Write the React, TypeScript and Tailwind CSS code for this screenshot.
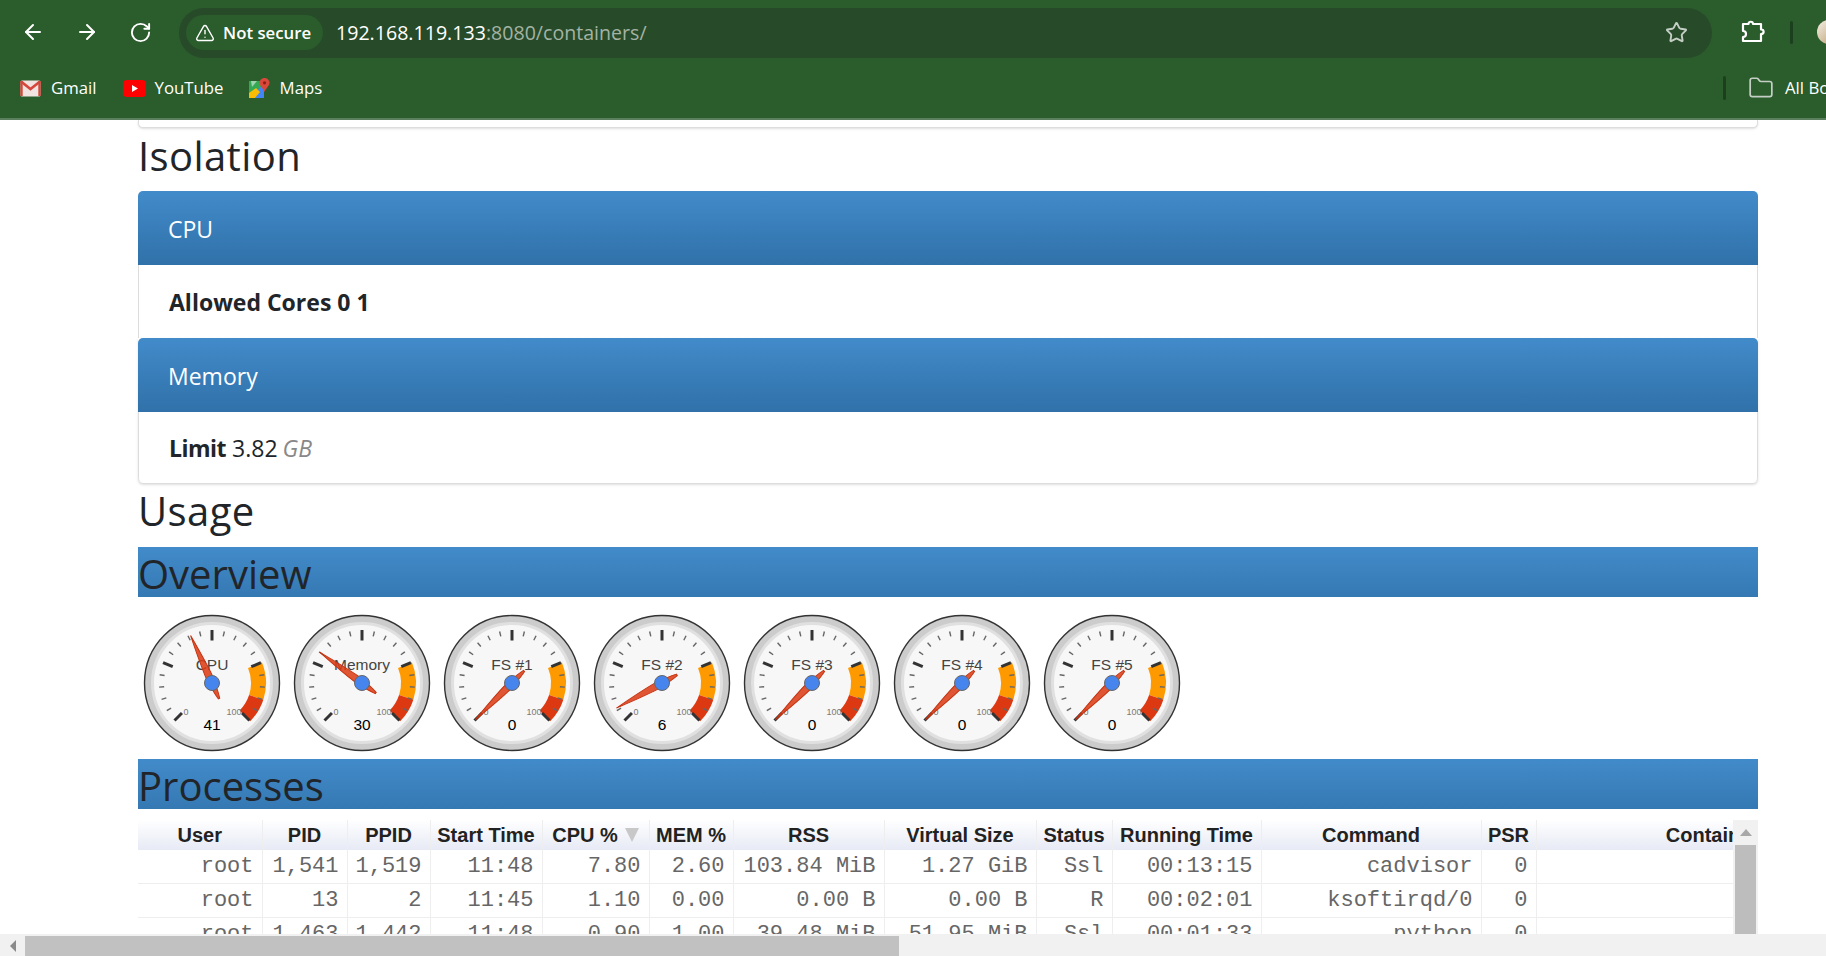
import { ArrowLeft, ArrowRight, Folder, RotateCw, Star, TriangleAlert } from "lucide-react";

const gauges = [
  { label: "CPU", value: 41, needle: 41 },
  { label: "Memory", value: 30, needle: 30 },
  { label: "FS #1", value: 0, needle: 0 },
  { label: "FS #2", value: 6, needle: 6 },
  { label: "FS #3", value: 0, needle: 0 },
  { label: "FS #4", value: 0, needle: 0 },
  { label: "FS #5", value: 0, needle: 0 },
];

const columns = [
  { name: "User", width: 124 },
  { name: "PID", width: 85 },
  { name: "PPID", width: 83 },
  { name: "Start Time", width: 112 },
  { name: "CPU %", width: 107 },
  { name: "MEM %", width: 84 },
  { name: "RSS", width: 151 },
  { name: "Virtual Size", width: 152 },
  { name: "Status", width: 76 },
  { name: "Running Time", width: 149 },
  { name: "Command", width: 220 },
  { name: "PSR", width: 55 },
  { name: "Container", width: 353 },
];

const rows = [
  ["root", "1,541", "1,519", "11:48", "7.80", "2.60", "103.84 MiB", "1.27 GiB", "Ssl", "00:13:15", "cadvisor", "0", ""],
  ["root", "13", "2", "11:45", "1.10", "0.00", "0.00 B", "0.00 B", "R", "00:02:01", "ksoftirqd/0", "0", ""],
  ["root", "1,463", "1,442", "11:48", "0.90", "1.00", "39.48 MiB", "51.95 MiB", "Ssl", "00:01:33", "python", "0", ""],
];

const polar = (r: number, deg: number, c: number, cy: number) => {
  const a = (deg * Math.PI) / 180;
  return [c + r * Math.sin(a), cy - r * Math.cos(a)];
};

const valueAngle = (v: number) => -135 + (270 * v) / 100;

function bandPath(from: number, to: number, c: number, cy: number) {
  const a = valueAngle(from);
  const b = valueAngle(to);
  const [x1, y1] = polar(54, a, c, cy);
  const [x2, y2] = polar(54, b, c, cy);
  const [x3, y3] = polar(39, b, c, cy);
  const [x4, y4] = polar(39, a, c, cy);
  return `M${x1} ${y1}A54 54 0 0 1 ${x2} ${y2}L${x3} ${y3}A39 39 0 0 0 ${x4} ${y4}Z`;
}

function Gauge({ label, value, needle }: { label: string; value: number; needle: number }) {
  const c = 74;
  const cy = 86;
  const ticks = [];
  for (let i = 0; i <= 20; i++) {
    const deg = valueAngle(i * 5);
    const major = i % 5 === 0;
    const [x1, y1] = polar(53, deg, c, cy);
    const [x2, y2] = polar(major ? 42.5 : 48, deg, c, cy);
    ticks.push(
      <line key={i} x1={x1} y1={y1} x2={x2} y2={y2} stroke={major ? "#333333" : "#666666"} strokeWidth={major ? 3 : 1.4} />
    );
  }
  return (
    <svg width="150" height="162" viewBox="0 0 150 162" className="shrink-0 font-['Liberation_Sans',sans-serif]">
      <circle cx={c} cy={cy} r={67.5} fill="#cccccc" stroke="#333333" strokeWidth="1.4" />
      <circle cx={c} cy={cy} r={59.5} fill="#f7f7f7" stroke="#e0e0e0" strokeWidth="3" />
      <path d={bandPath(75, 90, c, cy)} fill="#ff9900" />
      <path d={bandPath(90, 100, c, cy)} fill="#dc3912" />
      {ticks}
      <text x={c} y={cy - 13.5} textAnchor="middle" fontSize="15.5" fill="#444444">{label}</text>
      <text x={c - 26} y={cy + 32} textAnchor="middle" fontSize="9" fill="#777777">0</text>
      <text x={c + 22} y={cy + 32} textAnchor="middle" fontSize="9" fill="#777777">100</text>
      <text x={c} y={cy + 47} textAnchor="middle" fontSize="15.5" fill="#000000">{value}</text>
      <g transform={`rotate(${valueAngle(needle)} ${c} ${cy})`}>
        <path
          d={`M${c} ${cy - 52}Q${c + 3} ${cy - 22} ${c + 3.4} ${cy - 6}Q${c + 2.5} ${cy + 8} ${c + 0.8} ${cy + 17}L${c - 0.8} ${cy + 17}Q${c - 2.5} ${cy + 8} ${c - 3.4} ${cy - 6}Q${c - 3} ${cy - 22} ${c} ${cy - 52}Z`}
          fill="#dc3912"
          fillOpacity="0.85"
          stroke="#c63310"
          strokeWidth="1"
        />
      </g>
      <circle cx={c} cy={cy} r={7.5} fill="#4684ee" stroke="#666666" strokeWidth="1" />
    </svg>
  );
}

function GmailIcon() {
  return (
    <svg width="21" height="17" viewBox="0 0 21 17" className="shrink-0">
      <rect x="0.5" y="0.5" width="20" height="16" rx="1.5" fill="#f1e4e0" />
      <path d="M1 1.5L10.5 9L20 1.5" fill="none" stroke="#d6473c" strokeWidth="2.6" />
      <path d="M1.5 1V16M19.5 1V16" stroke="#cf4a3e" strokeWidth="2.4" />
    </svg>
  );
}

function YoutubeIcon() {
  return (
    <svg width="23" height="17" viewBox="0 0 23 17" className="shrink-0">
      <rect width="23" height="17" rx="4" fill="#ff0000" />
      <path d="M9 5L15 8.5L9 12Z" fill="#ffffff" />
    </svg>
  );
}

function MapsIcon() {
  return (
    <svg width="21" height="21" viewBox="0 0 21 21" className="shrink-0">
      <path d="M0 3H15V20H0Z" fill="#34a853" />
      <path d="M0 20L15 6V20Z" fill="#4285f4" />
      <path d="M0 20V15L7 10L11 14L6 20Z" fill="#fbbc04" />
      <path d="M2 3H8L3 9Z" fill="#9fd3b0" />
      <path d="M15.5 0C18.5 0 20.5 2.2 20.5 4.8C20.5 8 17 10 15.5 14C14 10 10.5 8 10.5 4.8C10.5 2.2 12.5 0 15.5 0Z" fill="#d9483b" />
      <circle cx="15.5" cy="4.8" r="1.6" fill="#8a1f16" />
    </svg>
  );
}

function PuzzleIcon() {
  return (
    <svg width="24" height="24" viewBox="0 0 24 24" fill="none" stroke="#ffffff" strokeWidth="2.2" strokeLinejoin="round" className="shrink-0">
      <path d="M2 4H7.5C7.5 1 12 1 12 4H20V9.5C23.5 9.5 23.5 14 20 14V21H2V17C6 17 6 11 2 11Z" />
    </svg>
  );
}

function PanelHead({ title }: { title: string }) {
  return (
    <div className="h-[74px] flex items-center pl-[30px] pt-[2px] text-white text-[23px] bg-gradient-to-b from-[#428bca] to-[#3071a9] rounded-t-[5px]">
      {title}
    </div>
  );
}

function SectionBar({ title }: { title: string }) {
  return (
    <div className="h-[50px] bg-gradient-to-b from-[#428bca] to-[#3579b3] text-[40px] font-medium leading-[53px] text-[#212529]">
      {title}
    </div>
  );
}

export default function App() {
  return (
    <div className="h-[956px] w-[1826px] flex flex-col overflow-hidden bg-white font-['Open_Sans',sans-serif]">
      <header className="h-[120px] shrink-0 bg-[#2a5c2c] border-b-2 border-[#5b805d]">
        <div className="h-[64px] flex items-center pl-[21px] overflow-hidden">
          <ArrowLeft className="shrink-0 text-white" size={24} strokeWidth={2} />
          <ArrowRight className="shrink-0 text-white ml-[30px]" size={24} strokeWidth={2} />
          <RotateCw className="shrink-0 text-white ml-[30px]" size={23} strokeWidth={2} />
          <div className="ml-[27px] w-[1533px] shrink-0 h-[50px] mt-[1px] rounded-full bg-[#274a29] flex items-center pl-[7px] pr-[24px]">
            <div className="h-[35px] w-[137px] shrink-0 rounded-full bg-[#2a5c2c] flex items-center pl-[9px] gap-[8px] text-white text-[16.8px] font-semibold whitespace-nowrap">
              <TriangleAlert className="shrink-0" size={20} strokeWidth={1.7} />
              Not secure
            </div>
            <div className="ml-[13px] text-[19.6px] text-white whitespace-nowrap">
              192.168.119.133<span className="text-[#a3b3a4]">:8080/containers/</span>
            </div>
            <Star className="ml-auto text-[#c4cec5]" size={23} strokeWidth={2} />
          </div>
          <div className="ml-[29px] shrink-0"><PuzzleIcon /></div>
          <div className="ml-[25px] w-[3px] h-[23px] shrink-0 bg-[#1c401e] rounded" />
          <div className="ml-[24px] w-[24px] h-[24px] shrink-0 rounded-full bg-gradient-to-br from-[#f5f0e6] to-[#b69a6a]" />
        </div>
        <div className="h-[54px] flex items-center text-white text-[16.8px] pb-[6px]">
          <div className="flex-1 flex items-center pl-[20px]">
            <GmailIcon />
            <span className="ml-[10px]">Gmail</span>
            <span className="ml-[26px]"><YoutubeIcon /></span>
            <span className="ml-[9px]">YouTube</span>
            <span className="ml-[25px]"><MapsIcon /></span>
            <span className="ml-[10px]">Maps</span>
          </div>
          <div className="w-[103px] shrink-0 flex items-center overflow-hidden">
            <div className="w-[3px] h-[24px] shrink-0 bg-[#1c401e] rounded" />
            <Folder className="ml-[22px] shrink-0 text-[#c4cec5]" size={26} strokeWidth={1.6} />
            <span className="ml-[11px] whitespace-nowrap">All Bookmarks</span>
          </div>
        </div>
      </header>

      <main className="flex-1 min-h-0 overflow-hidden pl-[138px] pr-[68px]">
        <div className="h-[8px] bg-white border-x border-b border-[#dddddd] rounded-b-[5px] shadow-sm" />
        <h2 className="h-[63px] text-[40px] font-medium tracking-[0.4px] leading-[55px] text-[#212529]">Isolation</h2>
        <PanelHead title="CPU" />
        <div className="h-[73px] flex items-center pl-[30px] pt-[1px] text-[23px] text-[#212529] bg-white border-x border-[#dddddd]">
          <span className="font-bold">Allowed Cores 0 1</span>
        </div>
        <div className="rounded-b-[5px] border-b border-[#dddddd] shadow-sm">
          <PanelHead title="Memory" />
          <div className="h-[71px] flex items-center pl-[30px] pt-[2px] text-[23px] text-[#212529] border-x border-[#dddddd] rounded-b-[5px]">
            <span className="font-bold tracking-[-0.5px]">Limit</span>
            <span className="ml-[6px]">3.82</span>
            <em className="ml-[5px] text-[#888888]">GB</em>
          </div>
        </div>
        <h2 className="h-[63px] text-[40px] font-medium tracking-[0.4px] leading-[54px] text-[#212529]">Usage</h2>
        <SectionBar title="Overview" />
        <div className="h-[162px] flex">
          {gauges.map((g) => (
            <Gauge key={g.label} label={g.label} value={g.value} needle={g.needle} />
          ))}
        </div>
        <SectionBar title="Processes" />
        <div className="mt-[11px] flex h-[114px] overflow-hidden">
          <div className="flex-1 min-w-0 overflow-hidden">
            <table className="table-fixed w-[1751px] border-collapse">
              <colgroup>
                {columns.map((col) => (
                  <col key={col.name} style={{ width: col.width }} />
                ))}
              </colgroup>
              <thead>
                <tr className="h-[30px] bg-gradient-to-b from-[#ffffff] to-[#e7eaf5]">
                  {columns.map((col) => (
                    <th key={col.name} className="p-0 border-r border-[#eeeeee] text-center text-[20px] leading-[24px] font-bold text-[#222222] font-['Liberation_Sans',sans-serif] whitespace-nowrap">
                      {col.name}
                      {col.name === "CPU %" && (
                        <span className="inline-block ml-[7px] w-0 h-0 border-x-[7px] border-x-transparent border-t-[14px] border-t-[#c8c8c8]" />
                      )}
                    </th>
                  ))}
                </tr>
              </thead>
              <tbody>
                {rows.map((row) => (
                  <tr key={row[1]} className="h-[33px] border-b border-[#eeeeee]">
                    {row.map((cell, i) => (
                      <td key={i} className="p-0 pr-[8px] text-right border-r border-[#eeeeee] text-[22px] text-[#666666] font-['Liberation_Mono',monospace] whitespace-nowrap">
                        {cell}
                      </td>
                    ))}
                  </tr>
                ))}
              </tbody>
            </table>
          </div>
          <div className="w-[25px] shrink-0 bg-[#f1f1f1] flex flex-col">
            <div className="h-[25px] shrink-0 flex items-center justify-center">
              <div className="w-0 h-0 border-x-[6px] border-x-transparent border-b-[7px] border-b-[#a8a8a8]" />
            </div>
            <div className="flex-1 mx-[2px] bg-[#bdbdbd]" />
          </div>
        </div>
      </main>

      <div className="h-[22px] shrink-0 bg-[#f1f1f1] flex items-end">
        <div className="w-[25px] h-[20px] flex items-center justify-center">
          <div className="w-0 h-0 border-y-[6px] border-y-transparent border-r-[6px] border-r-[#8a8a8a]" />
        </div>
        <div className="w-[874px] h-[20px] bg-[#c1c1c1]" />
      </div>
    </div>
  );
}
